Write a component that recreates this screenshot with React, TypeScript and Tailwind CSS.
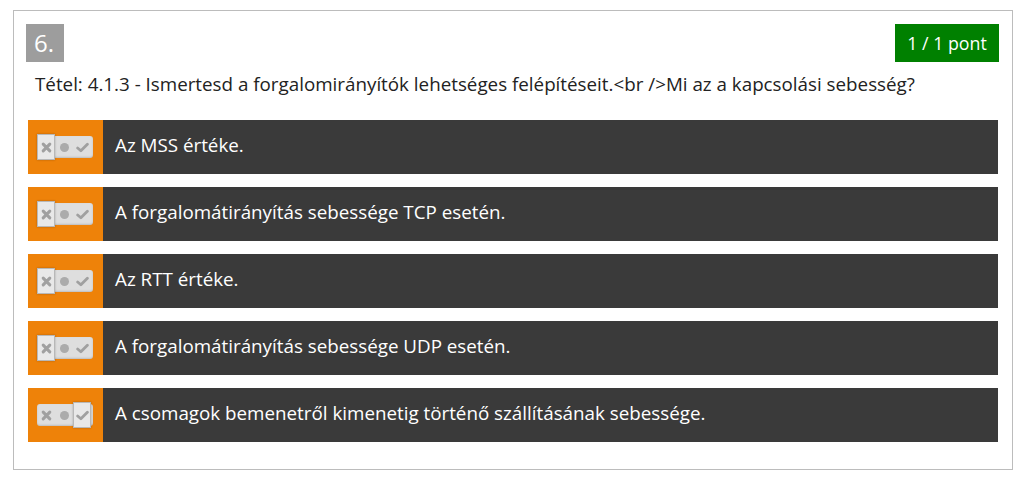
const answers = [
  { text: "Az MSS értéke.", state: "no" },
  { text: "A forgalomátirányítás sebessége TCP esetén.", state: "no" },
  { text: "Az RTT értéke.", state: "no" },
  { text: "A forgalomátirányítás sebessége UDP esetén.", state: "no" },
  { text: "A csomagok bemenetről kimenetig történő szállításának sebessége.", state: "yes" },
];

function Toggle({ state }: { state: string }) {
  const seg = (active: boolean) =>
    `flex items-center justify-center w-[18px] h-[26px] ${
      active ? "border border-[#b8b8b8] bg-[#e8e8e8] shadow-[0_0_2px_rgba(0,0,0,0.25)]" : ""
    }`;
  return (
    <div className="flex items-center h-[22px] w-[56px] rounded-[3px] bg-[#dedede] shadow-[inset_0_-1px_2px_rgba(0,0,0,0.15)]">
      <div className={seg(state === "no")}>
        <svg width="11" height="11" viewBox="0 0 10 10">
          <path d="M2 2 L8 8 M8 2 L2 8" stroke="#a0a0a0" strokeWidth="2.8" strokeLinecap="round" />
        </svg>
      </div>
      <div className={seg(false)}>
        <div className="w-[9px] h-[9px] rounded-full bg-[#ababab]" />
      </div>
      <div className={seg(state === "yes")}>
        <svg width="13" height="11" viewBox="0 0 12 10">
          <path d="M1.5 5.5 L4.5 8 L10.5 2" stroke="#a0a0a0" strokeWidth="2.6" fill="none" strokeLinecap="round" strokeLinejoin="round" />
        </svg>
      </div>
    </div>
  );
}

export default function App() {
  return (
    <div className="w-[1020px] h-[480px] bg-white pt-[10px] pl-[13px] font-['Open_Sans',sans-serif]">
      <div className="w-[1000px] h-[460px] border border-[#bcbcbc] pt-[13px] pl-[12px] pr-[13px]">
        {/* header */}
        <div className="flex justify-between items-start">
          <div className="w-[38px] h-[38px] bg-[#9d9d9d] text-white text-[24px] leading-[38px] pl-[8px]">6.</div>
          <div className="w-[104px] h-[38px] bg-[#008000] text-white text-[17.8px] leading-[38px] text-center">1 / 1 pont</div>
        </div>
        <div className="mt-[10px] ml-[9px] text-[18.8px] leading-[24px] text-[#222]">
          Tétel: 4.1.3 - Ismertesd a forgalomirányítók lehetséges felépítéseit.&lt;br /&gt;Mi az a kapcsolási sebesség?
        </div>

        {/* answers */}
        <div className="mt-[24px] ml-[2px] mr-[1px] flex flex-col gap-[13px]">
          {answers.map((a, i) => (
            <div key={i} className="flex h-[54px] bg-[#3a3a3a]">
              <div className="w-[75px] bg-[#ee8209] flex items-center pl-[9px]">
                <Toggle state={a.state} />
              </div>
              <div className="flex items-center pl-[12px] pb-[3px] text-white text-[18.8px]">{a.text}</div>
            </div>
          ))}
        </div>
      </div>
    </div>
  );
}
